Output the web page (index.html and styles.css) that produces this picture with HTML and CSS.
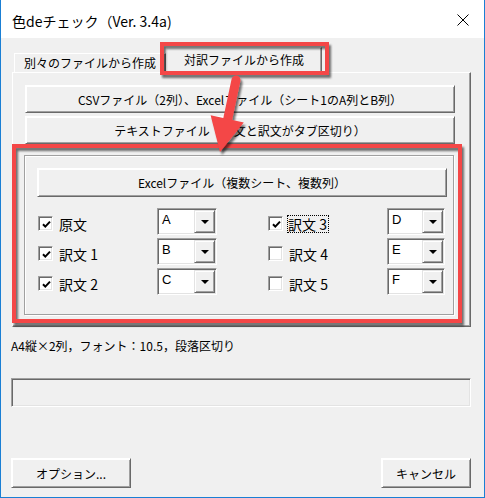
FILE: index.html
```html
<!DOCTYPE html>
<html lang="ja">
<head>
<meta charset="utf-8">
<title>色deチェック</title>
<link rel="stylesheet" href="styles.css">
</head>
<body>
<div class="window">
  <div class="titlebar">
    <span class="title">色deチェック（Ver. 3.4a)</span>
    <svg class="close" width="12" height="12" viewBox="0 0 12 12"><path d="M0.5 0.5L11.5 11.5M11.5 0.5L0.5 11.5" stroke="#000" stroke-width="1" fill="none"/></svg>
  </div>
  <div class="content">
    <div class="tabs">
      <div class="tab">別々のファイルから作成</div>
      <div class="tab active">対訳ファイルから作成</div>
    </div>
    <div class="panel">
      <button class="btn wide">CSVファイル（2列）、Excelファイル（シート1のA列とB列）</button>
      <button class="btn wide second">テキストファイル（原文と訳文がタブ区切り）</button>
      <div class="group">
        <button class="btn excel">Excelファイル（複数シート、複数列）</button>
        <div class="grid">
          <label class="chk"><span class="box on"><svg width="9" height="9" viewBox="0 0 9 9"><path d="M1 4.2L3.3 6.6L8 1.6" stroke="#000" stroke-width="2" fill="none"/></svg></span><span class="lbl">原文</span></label>
          <div class="combo"><span class="val">A</span><span class="drop"><i></i></span></div>
          <label class="chk right"><span class="box on"><svg width="9" height="9" viewBox="0 0 9 9"><path d="M1 4.2L3.3 6.6L8 1.6" stroke="#000" stroke-width="2" fill="none"/></svg></span><span class="lbl focus">訳文 3</span></label>
          <div class="combo narrow"><span class="val">D</span><span class="drop"><i></i></span></div>

          <label class="chk"><span class="box on"><svg width="9" height="9" viewBox="0 0 9 9"><path d="M1 4.2L3.3 6.6L8 1.6" stroke="#000" stroke-width="2" fill="none"/></svg></span><span class="lbl">訳文 1</span></label>
          <div class="combo"><span class="val">B</span><span class="drop"><i></i></span></div>
          <label class="chk right"><span class="box"></span><span class="lbl">訳文 4</span></label>
          <div class="combo narrow"><span class="val">E</span><span class="drop"><i></i></span></div>

          <label class="chk"><span class="box on"><svg width="9" height="9" viewBox="0 0 9 9"><path d="M1 4.2L3.3 6.6L8 1.6" stroke="#000" stroke-width="2" fill="none"/></svg></span><span class="lbl">訳文 2</span></label>
          <div class="combo"><span class="val">C</span><span class="drop"><i></i></span></div>
          <label class="chk right"><span class="box"></span><span class="lbl">訳文 5</span></label>
          <div class="combo narrow"><span class="val">F</span><span class="drop"><i></i></span></div>
        </div>
      </div>
    </div>
    <div class="status">A4縦×2列，フォント：10.5，段落区切り</div>
    <div class="progress"></div>
    <div class="footer">
      <button class="btn option">オプション...</button>
      <button class="btn cancel">キャンセル</button>
    </div>
  </div>
  <svg class="annot" width="485" height="498" viewBox="0 0 485 498">
    <defs>
      <filter id="sh" x="-20%" y="-20%" width="140%" height="140%">
        <feDropShadow dx="2" dy="3" stdDeviation="1.2" flood-color="#000" flood-opacity="0.55"/>
      </filter>
    </defs>
    <g filter="url(#sh)" fill="none" stroke="#f44646" stroke-width="4">
      <rect x="162" y="44" width="165" height="29"/>
      <rect x="14" y="146" width="446" height="175"/>
    </g>
    <g filter="url(#sh)" fill="#f44646">
      <line x1="236" y1="80" x2="227.5" y2="120" stroke="#f44646" stroke-width="9" stroke-linecap="round"/>
      <polygon points="243.8,122.4 220,152 210.6,115.2"/>
    </g>
  </svg>
</div>
</body>
</html>
```

FILE: styles.css
```css
html, body {
  margin: 0;
  padding: 0;
  background: #f0f0f0;
}

.window {
  position: relative;
  width: 485px;
  height: 498px;
  box-sizing: border-box;
  border: 1px solid #1a7fd4;
  border-top: none;
  background: #f0f0f0;
  font-family: "Noto Sans CJK JP", "Liberation Sans", sans-serif;
  color: #000;
  overflow: hidden;
}

.titlebar {
  height: 38px;
  background: #fff;
  display: flex;
  align-items: center;
  justify-content: space-between;
  padding: 3px 15px 0 11px;
  box-sizing: border-box;
}

.title {
  font-size: 14px;
  line-height: 18px;
}

.close {
  display: block;
  margin-top: -1px;
}

.content {
  padding: 0 0 0 10px;
}

.tabs {
  display: flex;
  align-items: flex-end;
  height: 34px;
  padding-left: 3px;
  box-sizing: border-box;
}

.tab {
  box-sizing: border-box;
  height: 19px;
  width: 152px;
  font-size: 12px;
  line-height: 18px;
  text-align: center;
  border: 1px solid;
  border-color: #fff #696969 transparent #fff;
  border-bottom: none;
  box-shadow: inset -1px 0 #a0a0a0;
  background: #f0f0f0;
}

.tab.active {
  position: relative;
  z-index: 1;
  height: 26px;
  width: 156px;
  margin-bottom: -1px;
  line-height: 24px;
}

.panel {
  box-sizing: border-box;
  width: 459px;
  height: 255px;
  margin-left: 1px;
  padding: 12px 0 0 11px;
  border: 1px solid;
  border-color: #fff #696969 #696969 #fff;
  box-shadow: inset -1px -1px #a0a0a0;
}

.btn {
  display: block;
  box-sizing: border-box;
  padding: 0;
  margin: 0;
  font-family: "Noto Sans CJK JP", "Liberation Sans", sans-serif;
  font-size: 12px;
  color: #000;
  background: #f0f0f0;
  border: 1px solid;
  border-color: #fff #696969 #696969 #fff;
  box-shadow: inset 1px 1px #fff, inset -1px -1px #a0a0a0;
  text-align: center;
}

.wide {
  width: 430px;
  height: 28px;
  margin-left: 1px;
}

.second {
  margin-top: 3px;
}

.group {
  box-sizing: border-box;
  width: 430px;
  height: 160px;
  margin-top: 11px;
  padding: 12px 0 0 12px;
  border: 1px solid #a0a0a0;
  box-shadow: inset 1px 1px #fff, 1px 1px #fff;
}

.excel {
  width: 410px;
  height: 29px;
}

.grid {
  display: grid;
  grid-template-columns: 120px 60px 50px 120px 58px;
  grid-auto-rows: 27px;
  row-gap: 3px;
  margin-top: 11px;
}

.chk {
  display: flex;
  align-items: center;
  gap: 6px;
  margin: 4px 0 0 1px;
  font-size: 14px;
  line-height: 16px;
}

.chk.right {
  grid-column: 4;
}

.box {
  width: 15px;
  height: 15px;
  box-sizing: border-box;
  flex: none;
  border: 1px solid;
  border-color: #a0a0a0 #fff #fff #a0a0a0;
  box-shadow: inset 1px 1px #696969, inset -1px -1px #e3e3e3;
  background: #fff;
  display: flex;
  align-items: center;
  justify-content: center;
}

.box svg {
  display: block;
  margin: 1px 0 0 1px;
}

.focus {
  border: 1px dotted #000;
  padding: 0 1px 0 0;
  margin-left: -2px;
}

.combo {
  box-sizing: border-box;
  height: 27px;
  display: flex;
  padding: 1px;
  border: 1px solid;
  border-color: #a0a0a0 #fff #fff #a0a0a0;
  box-shadow: inset 1px 1px #696969, inset -1px -1px #e3e3e3;
  background: #fff;
}

.val {
  flex: 1;
  padding: 2px 0 0 3px;
  font-family: "Liberation Sans", sans-serif;
  font-size: 13px;
  line-height: 15px;
}

.drop {
  width: 21px;
  box-sizing: border-box;
  background: #f0f0f0;
  border: 1px solid;
  border-color: #e3e3e3 #696969 #696969 #e3e3e3;
  box-shadow: inset 1px 1px #fff, inset -1px -1px #a0a0a0;
  display: flex;
  align-items: center;
  justify-content: center;
}

.drop i {
  display: block;
  width: 0;
  height: 0;
  border-top: 4px solid #000;
  border-left: 4px solid transparent;
  border-right: 4px solid transparent;
}

.status {
  margin-top: 11px;
  font-size: 12px;
  line-height: 16px;
  white-space: nowrap;
}

.progress {
  box-sizing: border-box;
  width: 460px;
  height: 29px;
  margin-top: 24px;
  border: 1px solid;
  border-color: #a0a0a0 #fff #fff #a0a0a0;
  box-shadow: inset 1px 1px #696969, inset -1px -1px #e3e3e3;
  background: #f0f0f0;
}

.footer {
  width: 460px;
  display: flex;
  justify-content: space-between;
  margin-top: 51px;
}

.option {
  width: 120px;
  height: 30px;
}

.cancel {
  width: 90px;
  height: 30px;
}

.annot {
  position: absolute;
  left: -1px;
  top: 0;
  z-index: 2;
  pointer-events: none;
}
```
